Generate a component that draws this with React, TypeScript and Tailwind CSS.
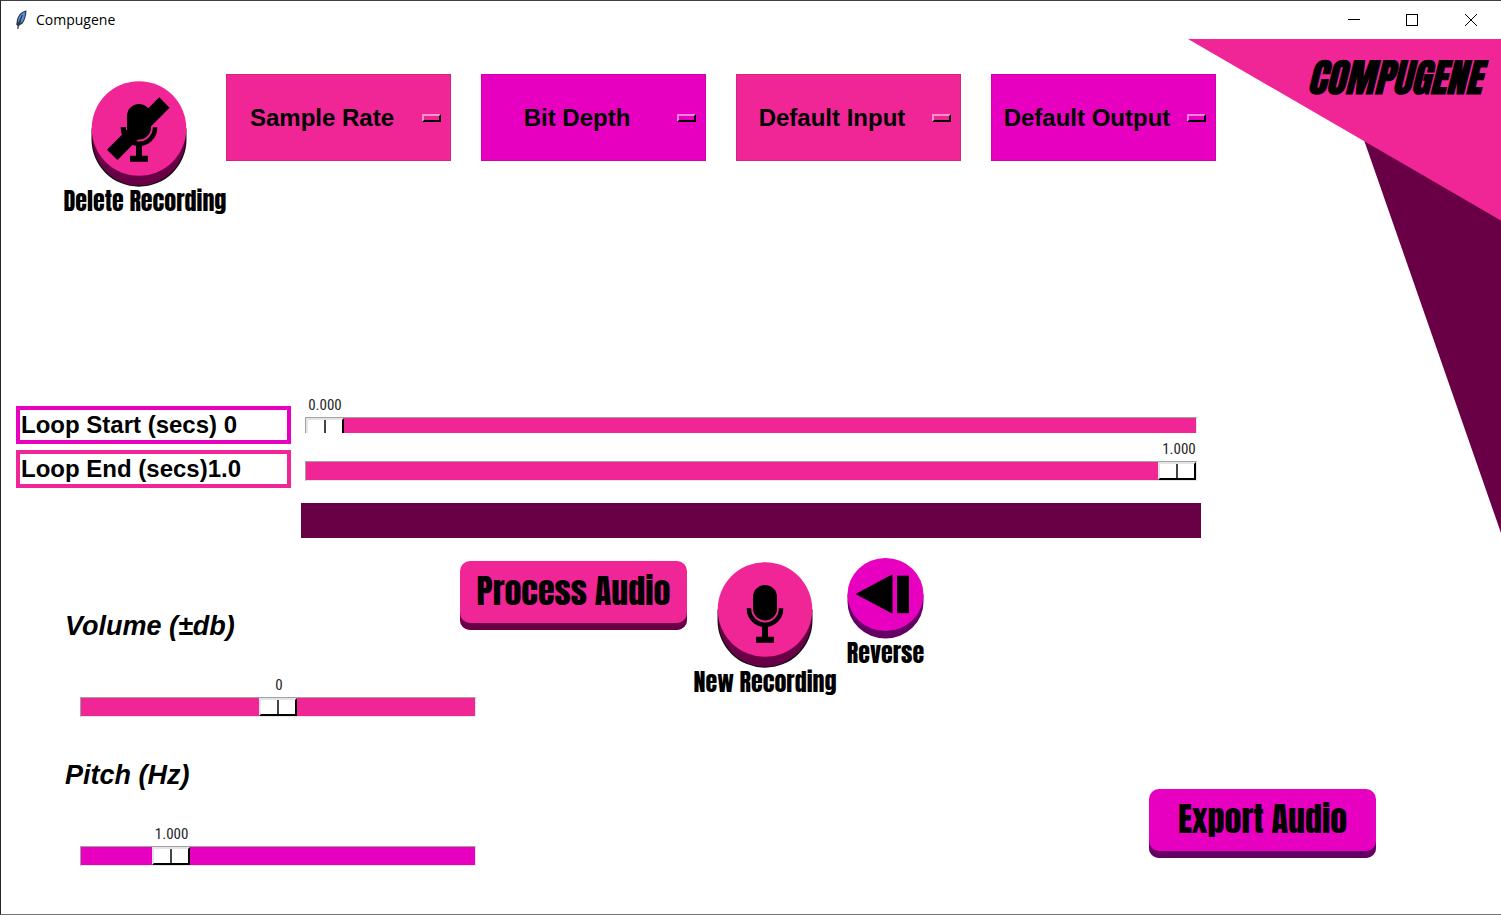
import { useState } from "react";

const DISPLAY_FONT = "font-[Anton,Impact,sans-serif] font-normal";

function Feather() {
  return (
    <svg width="16" height="20" viewBox="0 0 16 20" aria-hidden="true">
      <path d="M13.500 .5C9 1 5.500 4.500 4 9.500L3.300 14.500L5 16.500L9.500 13.500C12 10.500 13.300 5.500 13.500 .5Z" fill="#26374f" />
      <path d="M12 1.800C8.500 3 6 6 5 10.500L5.500 13L9 5.500L7.300 13.500L9.700 11.500C11.500 8.500 12.200 5 12 1.800Z" fill="#5b92d6" />
      <path d="M9.500 5L5.500 14L4.800 19" stroke="#333c48" strokeWidth="1.200" fill="none" />
    </svg>
  );
}

function TitleBar() {
  const control = "flex h-full w-[58px] items-center justify-center";
  return (
    <div className="flex h-[38px] items-center pl-3 font-['Open_Sans',sans-serif] text-sm">
      <Feather />
      <span className="ml-[7px] flex-1">Compugene</span>
      <button className={control} aria-label="Minimize">
        <svg width="12" height="12" viewBox="0 0 12 12"><path d="M0 5.500H12" stroke="black" /></svg>
      </button>
      <button className={control} aria-label="Maximize">
        <svg width="12" height="12" viewBox="0 0 12 12"><rect x=".5" y=".5" width="11" height="11" fill="none" stroke="black" /></svg>
      </button>
      <button className="flex h-full w-[60px] items-center justify-center" aria-label="Close">
        <svg width="12" height="12" viewBox="0 0 12 12"><path d="M0 0L12 12M12 0L0 12" stroke="black" /></svg>
      </button>
    </div>
  );
}

function MicDisc({ muted = false }: { muted?: boolean }) {
  return (
    <svg width="96" height="106" viewBox="0 0 96 106" aria-hidden="true">
      <path d="M.5 47.500V58.500A47.500 47.200 0 0 0 95.500 58.500V47.500Z" fill="#111" />
      <path d="M1.500 52V57.500A46.500 47 0 0 0 94.500 57.500V52Z" fill="#690046" />
      <circle cx="48" cy="47.500" r="47.300" fill="#f02596" />
      <rect x="36" y="23" width="24" height="35.500" rx="12" />
      <path d="M32 46.300V47A16 15.700 0 0 0 64 47V46.300" fill="none" stroke="black" strokeWidth="4.500" />
      <path d="M45 62H51V74.700H57V80.700H39V74.700H45Z" />
      {muted && (
        <>
          <path d="M36 36V58.500H48L60 48V36Z" />
          <path d="M30 46.300H35V60H32Z" />
          <path d="M68.300 16.300L78.500 26.700L26.500 79L16 68.700Z" />
        </>
      )}
    </svg>
  );
}

function ReverseDisc() {
  return (
    <svg width="77" height="81" viewBox="0 0 77 81" aria-hidden="true">
      <path d="M.5 36.500V44A38 36.500 0 0 0 76.500 44V36.500Z" fill="#640064" />
      <ellipse cx="38.500" cy="36.500" rx="38" ry="36.500" fill="#e800c0" />
      <path d="M8.500 36L45.500 16.300V55.700Z" />
      <rect x="50" y="17.700" width="12" height="37.500" />
    </svg>
  );
}

function Menu({ name, magenta = false }: { name: string; magenta?: boolean }) {
  return (
    <div className="relative w-[225px]">
      <select
        aria-label={name}
        className={`h-[87px] w-full appearance-none border border-black/10 pr-[33px] text-center text-2xl font-bold [text-align-last:center] ${
          magenta ? "bg-[#e800c0]" : "bg-[#f02596]"
        }`}
      >
        <option>{name}</option>
      </select>
      <span className="pointer-events-none absolute top-10 right-[10px] h-2 w-[19px] border-2 border-t-white/50 border-r-black border-b-black border-l-white/50" />
    </div>
  );
}

type ScaleProps = {
  id: string;
  min: number;
  max: number;
  step: number;
  initial: number;
  digits: number;
  magenta?: boolean;
  clipped?: boolean;
};

function Scale({ id, min, max, step, initial, digits, magenta, clipped }: ScaleProps) {
  const [value, setValue] = useState(initial);
  const ratio = (value - min) / (max - min);
  return (
    <div>
      <output
        htmlFor={id}
        className="flex h-5 w-[38px] justify-center pl-[2px] font-['Roboto_Condensed',Roboto,sans-serif] text-[15px] leading-4 text-neutral-800"
        style={{ marginLeft: `calc((100% - 38px) * ${ratio})` }}
      >
        {value.toFixed(digits)}
      </output>
      <div className={clipped ? "h-4 overflow-hidden" : "h-5"}>
        <input
          id={id}
          type="range"
          min={min}
          max={max}
          step={step}
          value={value}
          onChange={(e) => setValue(Number(e.target.value))}
          className={`block h-5 w-full appearance-none border border-t-neutral-400 border-r-neutral-200 border-b-neutral-200 border-l-neutral-400 [&::-webkit-slider-thumb]:h-[18px] [&::-webkit-slider-thumb]:w-[38px] [&::-webkit-slider-thumb]:appearance-none [&::-webkit-slider-thumb]:border-2 [&::-webkit-slider-thumb]:border-t-neutral-200 [&::-webkit-slider-thumb]:border-r-black [&::-webkit-slider-thumb]:border-b-black [&::-webkit-slider-thumb]:border-l-neutral-200 [&::-webkit-slider-thumb]:bg-[linear-gradient(to_right,white_16px,#444_16px,#444_18px,white_18px)] ${
            magenta ? "bg-[#e800c0]" : "bg-[#f02596]"
          }`}
        />
      </div>
    </div>
  );
}

export default function App() {
  const wide = "h-[69px] w-[227px] rounded-[10px] pb-[10px] text-[34px] leading-9";
  const caption = `text-2xl leading-7 whitespace-nowrap ${DISPLAY_FONT}`;
  const boxed = "flex h-[38px] items-center border-4 pl-px text-2xl font-bold whitespace-pre";
  const heading = "block text-[27px] leading-8 font-bold italic";
  return (
    <div className="relative flex min-h-screen flex-col border-t border-b border-l border-t-neutral-700 border-b-neutral-500 border-l-neutral-800 bg-white font-['Liberation_Sans',Arial,sans-serif] text-black">
      <svg className="absolute top-[38px] right-0" width="313" height="495" viewBox="0 0 313 495" aria-hidden="true">
        <path d="M176 101L313 181V494Z" fill="#690046" />
        <path d="M0 0H313V181.500Z" fill="#f02596" />
      </svg>

      <div className="relative flex flex-1 flex-col">
        <TitleBar />

        <header className="mb-[182px] flex items-start pt-[35px] pl-[63px]">
          <button className="mt-[7px] flex w-[162px] shrink-0 flex-col items-center">
            <span className="mr-3"><MicDisc muted /></span>
            <span className={caption}>Delete Recording</span>
          </button>
          <div className="flex gap-[30px]">
            <Menu name="Sample Rate" />
            <Menu name="Bit Depth" magenta />
            <Menu name="Default Input" />
            <Menu name="Default Output" magenta />
          </div>
          <h1 className={`-mt-4 mr-5 ml-auto text-[39px] leading-10 italic [-webkit-text-stroke:1px_black] ${DISPLAY_FONT}`}>COMPUGENE</h1>
        </header>

        <section className="flex gap-[10px] pr-[300px] pl-[15px]">
          <div className="flex w-[275px] shrink-0 flex-col gap-[6px] pt-[9px]">
            <label htmlFor="loop-start" className={`border-[#e800c0] ${boxed}`}>Loop Start (secs) 0</label>
            <label htmlFor="loop-end" className={`border-[#f02596] ${boxed}`}>Loop End (secs)1.0</label>
          </div>
          <div className="flex-1">
            <div className="flex flex-col gap-2 px-1">
              <Scale id="loop-start" min={0} max={1} step={0.001} initial={0} digits={3} clipped />
              <Scale id="loop-end" min={0} max={1} step={0.001} initial={1} digits={3} />
            </div>
            <div className="mt-[22px] h-[35px] bg-[#690046]" />
          </div>
        </section>

        <section className="mt-5 flex flex-1 items-start">
          <div className="-mr-4 ml-16 w-[411px] shrink-0 pt-[52px]">
            <label htmlFor="volume" className={heading}>Volume (±db)</label>
            <div className="mt-[35px] ml-[15px]">
              <Scale id="volume" min={-10} max={10} step={1} initial={0} digits={0} />
            </div>
            <label htmlFor="pitch" className={`mt-[42px] ${heading}`}>Pitch (Hz)</label>
            <div className="mt-[35px] ml-[15px]">
              <Scale id="pitch" min={0.5} max={3} step={0.001} initial={1} digits={3} magenta />
            </div>
          </div>
          <button className={`mt-[3px] bg-[#f02596] shadow-[inset_0_-7px_#690046] ${wide} ${DISPLAY_FONT}`}>Process Audio</button>
          <button className="mt-1 ml-[7px] flex w-[142px] flex-col items-center">
            <MicDisc />
            <span className={caption}>New Recording</span>
          </button>
          <button className="ml-[11px] flex w-[77px] flex-col items-center">
            <ReverseDisc />
            <span className={caption}>Reverse</span>
          </button>
          <button className={`mr-[125px] mb-14 ml-auto self-end bg-[#e800c0] shadow-[inset_0_-7px_#640064] ${wide} ${DISPLAY_FONT}`}>Export Audio</button>
        </section>
      </div>
    </div>
  );
}
